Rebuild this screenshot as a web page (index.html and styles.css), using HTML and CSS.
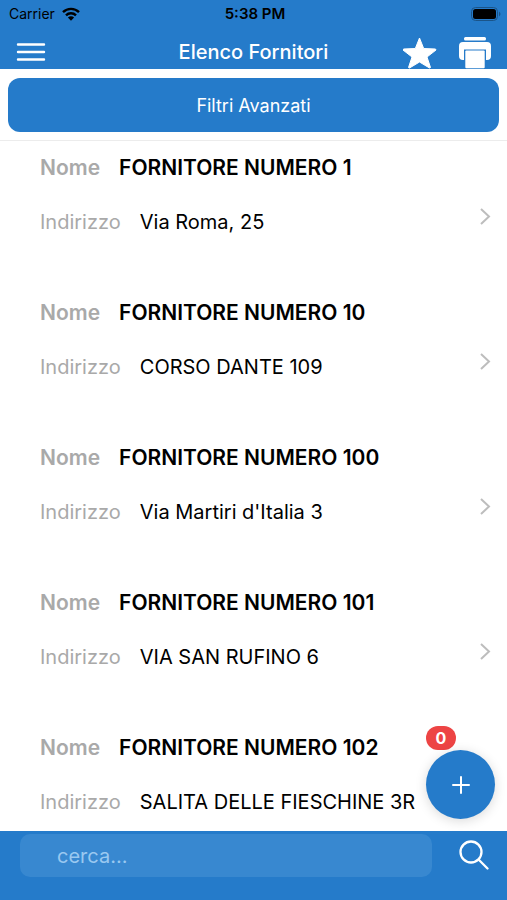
FILE: index.html
```html
<!DOCTYPE html>
<html lang="it">
<head>
<meta charset="utf-8">
<meta name="viewport" content="width=device-width, initial-scale=1">
<title>Elenco Fornitori</title>
<link rel="stylesheet" href="styles.css">
</head>
<body>
<div class="app">
  <header class="header">
    <div class="status">
      <span class="carrier">Carrier
        <svg width="18" height="14" viewBox="0 0 18 14" aria-hidden="true"><g fill="none" stroke="#000" stroke-width="2.4"><path d="M1 5.2a11.4 11.4 0 0 1 16 0"/><path d="M4 8.3a7.1 7.1 0 0 1 10 0"/></g><path d="M9 13.8 5.9 10.6a4.4 4.4 0 0 1 6.2 0z"/></svg>
      </span>
      <span class="time">5:38 PM</span>
      <svg class="battery" width="30" height="14" viewBox="0 0 30 14" aria-hidden="true"><rect x=".5" y=".5" width="26" height="13" rx="4" fill="none" stroke="#1b5488"/><rect x="2" y="2" width="23" height="10" rx="2.5"/><path d="M28 4.5q3 2.5 0 5z" fill="#1b5488"/></svg>
    </div>
    <div class="nav">
      <button class="icon-button" type="button" aria-label="Menu">
        <svg width="30" height="20" viewBox="0 0 30 20"><path d="M2 2.500h26M2 10h26M2 17.500h26" stroke="#fff" stroke-width="2.400" stroke-linecap="round"/></svg>
      </button>
      <h1 class="title">Elenco Fornitori</h1>
      <div class="actions">
        <button class="icon-button" type="button" aria-label="Preferiti">
          <svg width="34" height="32" viewBox="0 0 34 32"><path d="M16.500 1 20.700 11.500 32.500 12 33 13 24 20 27.500 30.500 26.500 31 16.500 25 6.500 31 5.500 30.500 9 20 0 13 .5 12 12.300 11.500z" fill="#fff" stroke="#fff" stroke-width="1" stroke-linejoin="round"/></svg>
        </button>
        <button class="icon-button" type="button" aria-label="Stampa">
          <svg width="32" height="32" viewBox="0 0 32 32"><g fill="#fff"><rect x="5" y="0" width="22" height="3.500" rx="1.500"/><path d="M4 5h24a4 4 0 0 1 4 4v10a4 4 0 0 1-4 4h-1V12.500H5V23H4a4 4 0 0 1-4-4V9a4 4 0 0 1 4-4z"/><rect x="6.300" y="13.500" width="19.400" height="17.700" rx="1"/></g></svg>
        </button>
      </div>
    </div>
  </header>
  <div class="filters">
    <button class="filter-button" type="button">Filtri Avanzati</button>
  </div>
  <main class="content">
    <ul class="list">
      <li><a class="supplier" href="#1"><span class="name"><span class="label">Nome</span>FORNITORE NUMERO 1</span><span class="address"><span class="label">Indirizzo</span>Via Roma, 25</span><svg class="chevron" width="12" height="18" viewBox="0 0 12 18"><path d="m2 2 8 7.500-8 7.500"/></svg></a></li>
      <li><a class="supplier" href="#10"><span class="name"><span class="label">Nome</span>FORNITORE NUMERO 10</span><span class="address"><span class="label">Indirizzo</span>CORSO DANTE 109</span><svg class="chevron" width="12" height="18" viewBox="0 0 12 18"><path d="m2 2 8 7.500-8 7.500"/></svg></a></li>
      <li><a class="supplier" href="#100"><span class="name"><span class="label">Nome</span>FORNITORE NUMERO 100</span><span class="address"><span class="label">Indirizzo</span>Via Martiri d'Italia 3</span><svg class="chevron" width="12" height="18" viewBox="0 0 12 18"><path d="m2 2 8 7.500-8 7.500"/></svg></a></li>
      <li><a class="supplier" href="#101"><span class="name"><span class="label">Nome</span>FORNITORE NUMERO 101</span><span class="address"><span class="label">Indirizzo</span>VIA SAN RUFINO 6</span><svg class="chevron" width="12" height="18" viewBox="0 0 12 18"><path d="m2 2 8 7.500-8 7.500"/></svg></a></li>
      <li><a class="supplier" href="#102"><span class="name"><span class="label">Nome</span>FORNITORE NUMERO 102</span><span class="address"><span class="label">Indirizzo</span>SALITA DELLE FIESCHINE 3R</span></a></li>
    </ul>
    <div class="add">
      <span class="badge">0</span>
      <button class="add-button" type="button" aria-label="Aggiungi">
        <svg width="18" height="18" viewBox="0 0 18 18"><path d="M9 1v16M1 9h16" stroke="#fff" stroke-width="2" stroke-linecap="round"/></svg>
      </button>
    </div>
  </main>
  <form class="search">
    <input class="search-input" type="text" placeholder="cerca..." aria-label="Cerca">
    <button class="icon-button" type="button" aria-label="Avvia ricerca">
      <svg width="30" height="30" viewBox="0 0 30 30"><g fill="none" stroke="#fff" stroke-width="2.300" stroke-linecap="round"><circle cx="12" cy="12" r="10.500"/><path d="m19.800 19.800 8.700 8.700"/></g></svg>
    </button>
  </form>
</div>
</body>
</html>
```
FILE: styles.css
```css
* {
  box-sizing: border-box;
}

body {
  margin: 0;
  background: #fff;
  color: #000;
  font-family: Inter, "Liberation Sans", sans-serif;
}

button,
input {
  font: inherit;
  border: 0;
}

button {
  padding: 0;
  cursor: pointer;
}

svg {
  display: block;
}

.app {
  display: flex;
  flex-direction: column;
  height: 100vh;
}

.header {
  background: #257bca;
}

.status {
  display: grid;
  grid-template-columns: 1fr auto 1fr;
  align-items: center;
  height: 27px;
  padding: 0 6px 0 9px;
  font-size: 14px;
}

.carrier {
  display: flex;
  align-items: center;
  gap: 7px;
}

.time {
  font-size: 15px;
  font-weight: 600;
}

.battery {
  justify-self: end;
}

.nav {
  display: grid;
  grid-template-columns: 1fr auto 1fr;
  align-items: center;
  height: 42px;
  padding: 8px 16px 0;
}

.icon-button {
  justify-self: start;
  background: none;
}

.title {
  margin: 0;
  font-size: 20px;
  font-weight: 500;
  line-height: 24px;
  color: #fff;
}

.actions {
  display: flex;
  justify-self: end;
  align-self: end;
  gap: 22px;
}

.filters {
  padding: 9px 8px 8px;
  border-bottom: 1px solid #ececec;
}

.filter-button {
  display: block;
  width: 100%;
  height: 54px;
  border-radius: 12px;
  background: #257bca;
  color: #fff;
  font-size: 18px;
}

.content {
  position: relative;
  flex: 1;
  min-height: 0;
}

.list {
  height: 100%;
  margin: 0;
  padding: 0;
  overflow: hidden;
  list-style: none;
}

.supplier {
  display: grid;
  grid-template-columns: 1fr auto;
  align-content: start;
  row-gap: 24px;
  height: 145px;
  padding: 12px 16px 0 40px;
  color: inherit;
  font-size: 20px;
  line-height: 30px;
  text-decoration: none;
}

.name {
  grid-column: 1 / -1;
  font-size: 21px;
  font-weight: 600;
}

.label {
  margin-right: 19px;
  color: #a9a9a9;
}

.chevron {
  align-self: start;
  fill: none;
  stroke: #bdbdbd;
  stroke-width: 2;
}

.add {
  position: absolute;
  right: 12px;
  bottom: 12px;
}

.badge {
  display: block;
  width: 30px;
  height: 24px;
  border-radius: 12px;
  background: #ed4444;
  color: #fff;
  font-size: 16px;
  font-weight: 700;
  line-height: 24px;
  text-align: center;
}

.add-button {
  display: grid;
  place-items: center;
  width: 69px;
  height: 69px;
  border-radius: 50%;
  background: #257bca;
  box-shadow: 0 2px 12px rgba(0, 0, 0, 0.15);
}

.search {
  display: flex;
  align-items: flex-start;
  gap: 27px;
  height: 69px;
  padding: 3px 18px 0 20px;
  background: #257bca;
}

.search-input {
  flex: 1;
  min-width: 0;
  height: 43px;
  padding: 0 37px;
  border-radius: 10px;
  background: #3888d0;
  color: #fff;
  font-size: 20px;
}

.search-input::placeholder {
  color: #9ac8f0;
}

.search .icon-button {
  margin-top: 6px;
}
```
